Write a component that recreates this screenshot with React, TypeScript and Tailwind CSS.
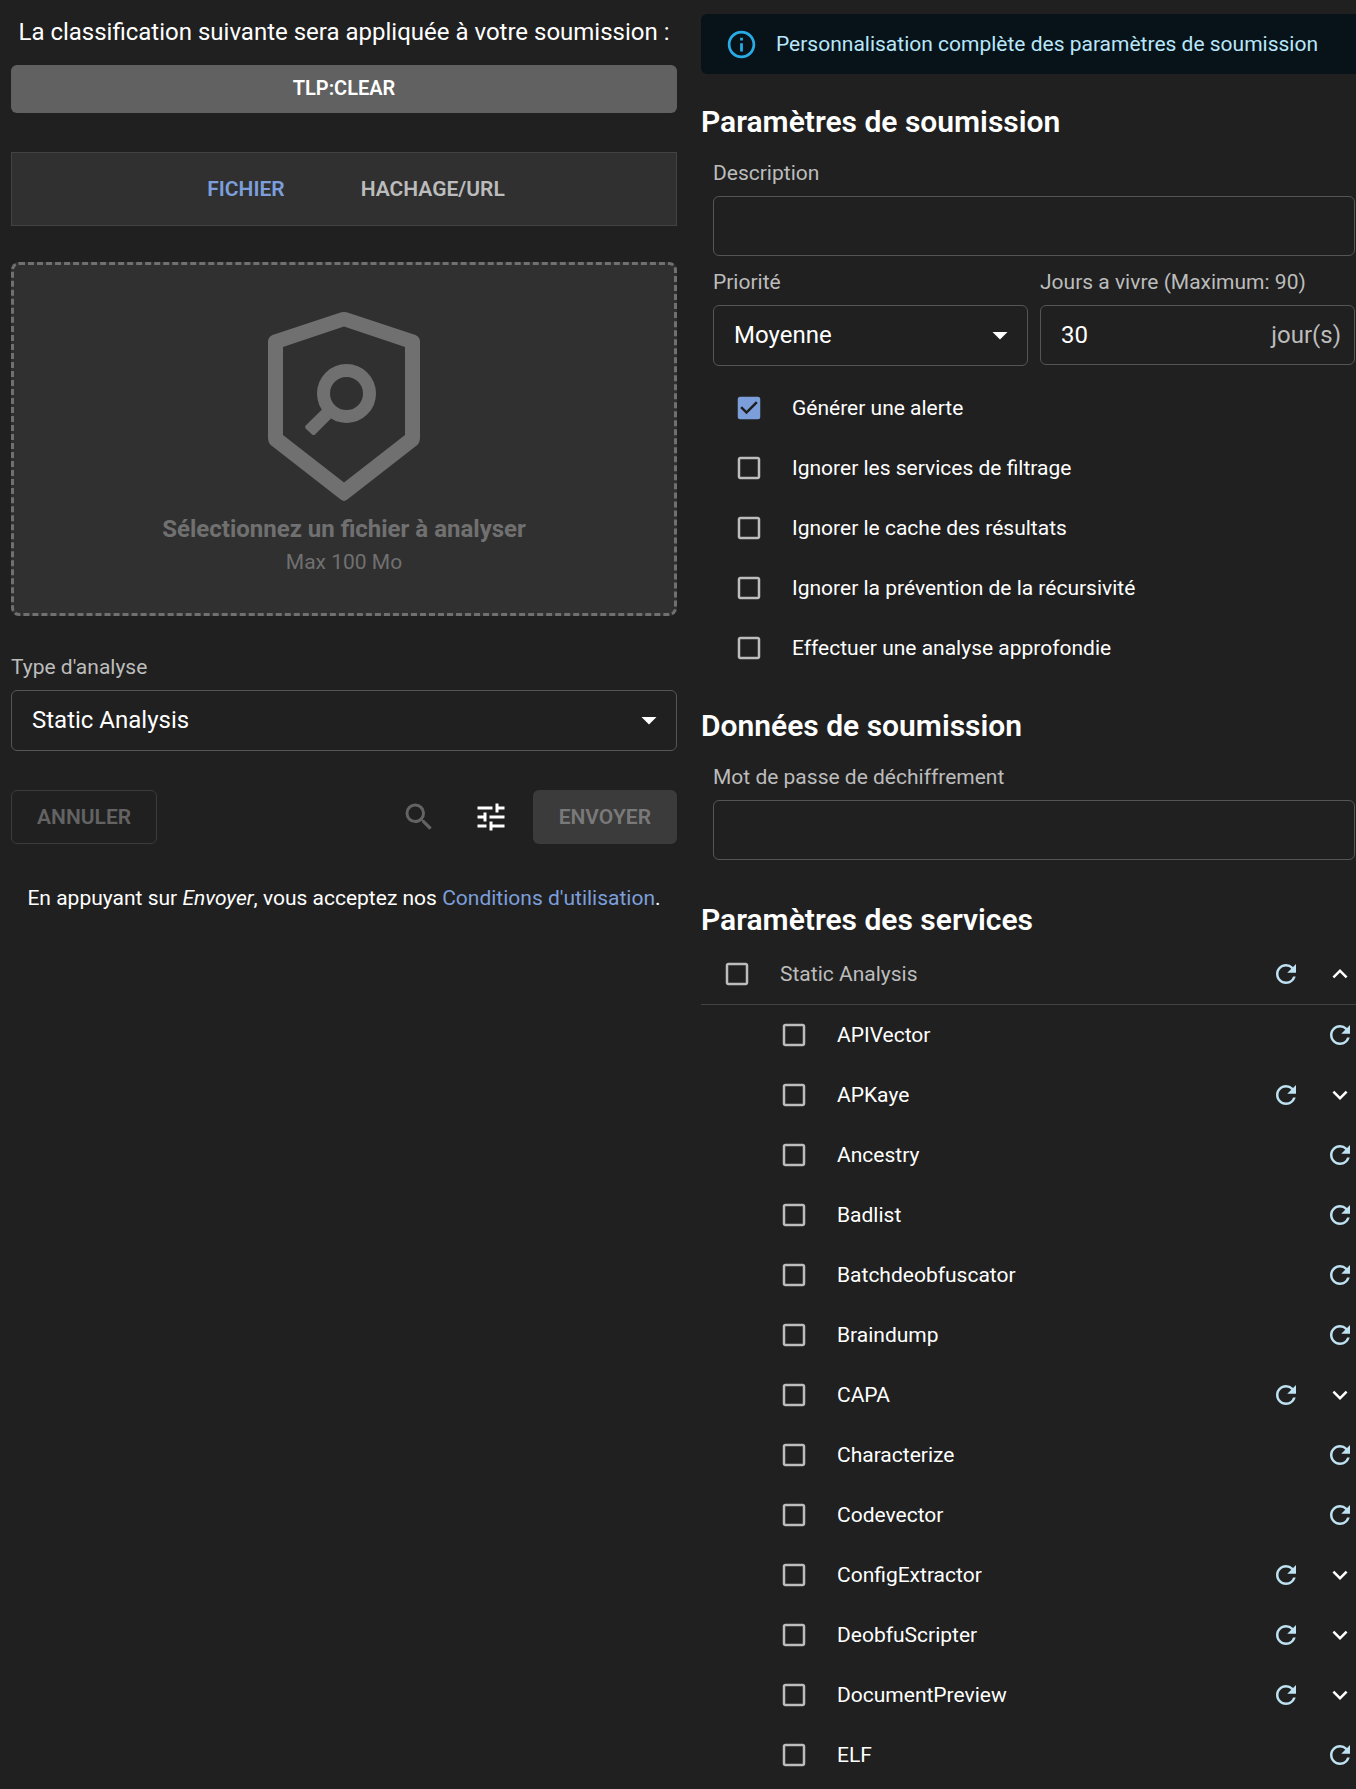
import { useState } from "react";
import { MdRefresh, MdExpandMore, MdExpandLess, MdTune, MdSearch, MdArrowDropDown, MdCheckBox, MdCheckBoxOutlineBlank, MdInfoOutline } from "react-icons/md";

const services: { name: string; expandable?: boolean }[] = [
  { name: "APIVector" },
  { name: "APKaye", expandable: true },
  { name: "Ancestry" },
  { name: "Badlist" },
  { name: "Batchdeobfuscator" },
  { name: "Braindump" },
  { name: "CAPA", expandable: true },
  { name: "Characterize" },
  { name: "Codevector" },
  { name: "ConfigExtractor", expandable: true },
  { name: "DeobfuScripter", expandable: true },
  { name: "DocumentPreview", expandable: true },
  { name: "ELF" },
];

const options = [
  { label: "Générer une alerte", checked: true },
  { label: "Ignorer les services de filtrage" },
  { label: "Ignorer le cache des résultats" },
  { label: "Ignorer la prévention de la récursivité" },
  { label: "Effectuer une analyse approfondie" },
];

function Check({ label, initial = false, muted = false }: { label: string; initial?: boolean; muted?: boolean }) {
  const [on, setOn] = useState(initial);
  return (
    <label className="relative flex h-[60px] min-w-0 flex-1 cursor-pointer items-center gap-7">
      <input type="checkbox" className="sr-only" checked={on} onChange={() => setOn(!on)} />
      {on ? (
        <MdCheckBox className="size-[30px] text-[#7c9fdb]" />
      ) : (
        <MdCheckBoxOutlineBlank className="size-[30px] text-[#bcbcbc]" />
      )}
      <span className={muted ? "text-[#bcbcbc]" : "text-white"}>{label}</span>
    </label>
  );
}

function Refresh({ name }: { name: string }) {
  return (
    <button type="button" aria-label={`Réinitialiser ${name}`} className="flex size-[30px] items-center justify-center text-[#bfe2f2]">
      <MdRefresh className="size-[30px]" />
    </button>
  );
}

function Select({ id, value }: { id: string; value: string }) {
  return (
    <div className="relative">
      <select id={id} className="h-[61px] w-full appearance-none rounded-md border border-[#555555] bg-transparent pr-14 pb-[2px] pl-5 text-2xl text-white">
        <option>{value}</option>
      </select>
      <MdArrowDropDown className="pointer-events-none absolute top-[12px] right-[10px] size-9 text-white" />
    </div>
  );
}

const labelClass = "block text-[21px] leading-[30px] text-[#bcbcbc]";
const inputClass = "block h-[60px] w-full rounded-md border border-[#555555] bg-transparent px-5 text-2xl text-white";
const headingClass = "text-[30px] leading-12 font-semibold text-white";

export default function App() {
  return (
    <main className="flex min-h-screen items-start gap-6 overflow-hidden bg-[#202020] pl-[11px] font-['Roboto',sans-serif] text-[21px] leading-[30px] text-white">
      <section className="min-w-0 flex-[666] pt-3">
        <p className="text-center text-2xl leading-10 whitespace-nowrap">La classification suivante sera appliquée à votre soumission :</p>
        <button type="button" className="mt-[13px] h-12 w-full rounded-md bg-[#616161] pb-[2px] text-xl font-semibold">TLP:CLEAR</button>

        <div role="tablist" className="mt-[39px] flex h-[74px] items-center justify-center border border-[#424242] bg-[#303030] pl-6 font-semibold">
          <button type="button" role="tab" aria-selected="true" className="px-[38px] text-[#7c9fdb]">FICHIER</button>
          <button type="button" role="tab" aria-selected="false" className="px-[38px] text-[#bcbcbc]">HACHAGE/URL</button>
        </div>

        <button type="button" className="mt-9 flex h-[354px] w-full flex-col items-center rounded-lg border-3 border-dashed border-[#707070] bg-[#303030] pt-[47px] text-[#707070]">
          <svg viewBox="0 0 152 190" className="h-[190px] w-[152px]" fill="currentColor">
            <path
              fillRule="evenodd"
              d="M71 .9Q76-.9 81 .9L147.500 23Q152 25 152 29.500V126Q152 131 148 134L79 187.800Q76 190 73 187.800L4 134Q0 131 0 126V29.500Q0 25 4.500 23ZM76 14.500 15 35V123L76 170.500 137 123V35Z"
            />
            <circle cx="78.500" cy="81.500" r="23" fill="none" stroke="currentColor" strokeWidth="13" />
            <path d="M54 97.500 37.700 113.500Q36.500 115 37.700 116.500L44 122.500Q45.500 123.500 47 122.500L63 106.500Z" />
          </svg>
          <span className="mt-[9px] text-2xl leading-9 font-bold">Sélectionnez un fichier à analyser</span>
          <span className="leading-[30px]">Max 100 Mo</span>
        </button>

        <div className="mt-9">
          <label htmlFor="analysis" className={labelClass}>Type d'analyse</label>
          <div className="mt-2"><Select id="analysis" value="Static Analysis" /></div>
        </div>

        <div className="mt-[39px] flex items-center">
          <button type="button" disabled className="h-[54px] rounded-md border border-[#3b3b3b] px-[25px] font-semibold text-[#636363]">ANNULER</button>
          <button type="button" disabled aria-label="Rechercher" className="mr-9 ml-auto text-[#636363]"><MdSearch className="size-9" /></button>
          <button type="button" aria-label="Paramètres" className="mr-6"><MdTune className="size-9" /></button>
          <button type="button" disabled className="h-[54px] rounded-md bg-[#3b3b3b] px-[26px] font-semibold text-[#797979]">ENVOYER</button>
        </div>

        <p className="mt-[39px] text-center whitespace-nowrap">
          En appuyant sur <em>Envoyer</em>, vous acceptez nos <a href="#conditions" className="text-[#7c9fdb]">Conditions d'utilisation</a>.
        </p>
      </section>

      <section className="min-w-0 flex-[655] pt-[14px]">
        <div role="status" className="flex h-[60px] items-center gap-[18px] rounded-l-md bg-[#071318] pl-6 text-[#b8e7fb]">
          <MdInfoOutline className="size-[33px] shrink-0 text-[#29abe6]" />
          <span className="whitespace-nowrap">Personnalisation complète des paramètres de soumission</span>
        </div>

        <h2 className={`mt-6 ${headingClass}`}>Paramètres de soumission</h2>
        <div className="mt-3 pr-px pl-3">
          <label htmlFor="description" className={labelClass}>Description</label>
          <input id="description" type="text" className={`mt-2 ${inputClass}`} />
          <div className="mt-[11px] grid grid-cols-2 gap-3">
            <div>
              <label htmlFor="priority" className={labelClass}>Priorité</label>
              <div className="mt-2"><Select id="priority" value="Moyenne" /></div>
            </div>
            <div>
              <label htmlFor="ttl" className={labelClass}>Jours a vivre (Maximum: 90)</label>
              <div className="relative mt-2">
                <input id="ttl" type="text" inputMode="numeric" defaultValue="30" className={inputClass} />
                <span className="pointer-events-none absolute inset-y-0 right-[14px] flex items-center text-2xl text-[#bcbcbc]">jour(s)</span>
              </div>
            </div>
          </div>
        </div>
        <div className="mt-3 pl-[33px]">
          {options.map((o) => (
            <div key={o.label} className="flex"><Check label={o.label} initial={o.checked} /></div>
          ))}
        </div>

        <h2 className={`mt-6 ${headingClass}`}>Données de soumission</h2>
        <div className="mt-3 pr-px pl-3">
          <label htmlFor="password" className={labelClass}>Mot de passe de déchiffrement</label>
          <input id="password" type="text" className={`mt-2 ${inputClass}`} />
        </div>

        <h2 className={`mt-9 ${headingClass}`}>Paramètres des services</h2>
        <div className="flex items-center gap-6 border-b border-[#424242] pr-px pl-[21px]">
          <Check label="Static Analysis" muted />
          <Refresh name="Static Analysis" />
          <button type="button" aria-label="Réduire Static Analysis" className="flex size-[30px] items-center justify-center"><MdExpandLess className="size-[30px]" /></button>
        </div>
        <ul>
          {services.map((s) => (
            <li key={s.name} className="flex items-center gap-6 pr-px pl-[78px]">
              <Check label={s.name} />
              <Refresh name={s.name} />
              {s.expandable && (
                <button type="button" aria-label={`Développer ${s.name}`} className="flex size-[30px] items-center justify-center"><MdExpandMore className="size-[30px]" /></button>
              )}
            </li>
          ))}
        </ul>
      </section>
    </main>
  );
}
